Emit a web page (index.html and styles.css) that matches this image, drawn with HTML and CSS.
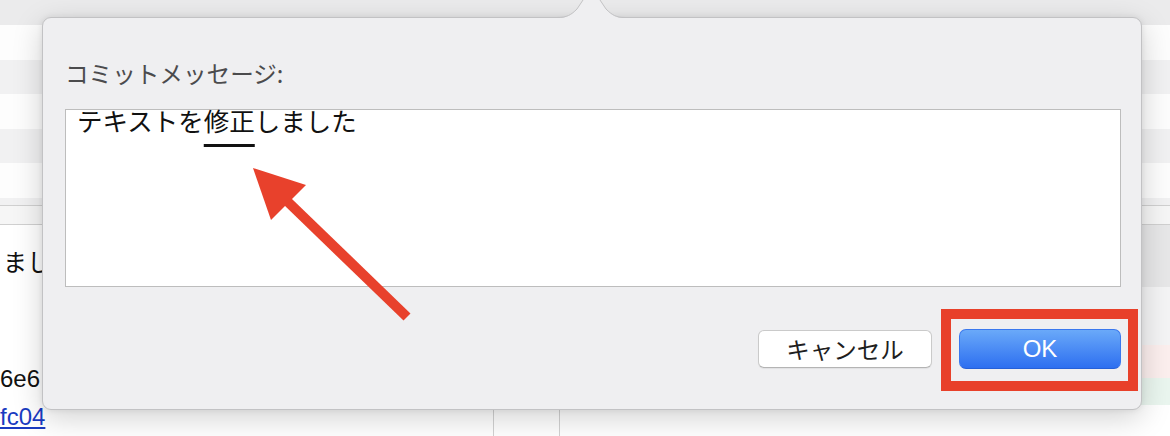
FILE: index.html
```html
<!DOCTYPE html>
<html lang="ja">
<head>
  <meta charset="UTF-8">
  <title>コミット</title>
  <link rel="stylesheet" href="styles.css">
</head>
<body>

<div class="app">
  <div class="toolbar"></div>
  <div class="history">
    <div class="history-row"></div>
    <div class="history-row alt"></div>
    <div class="history-row"></div>
    <div class="history-row alt"></div>
    <div class="history-row"></div>
    <div class="history-row alt short"></div>
  </div>
  <div class="tab-bar"></div>
  <div class="panes">
    <div class="pane pane-info">
      <p class="info-line message">ました</p>
      <p class="info-line hash">6e6</p>
      <p class="info-line"><a class="hash-link" href="#">fc04</a></p>
    </div>
    <div class="pane pane-mid"></div>
    <div class="pane pane-diff">
      <div class="diff-row hunk"></div>
      <div class="diff-row context"></div>
      <div class="diff-row removed"></div>
      <div class="diff-row added"></div>
    </div>
  </div>
</div>

<div class="sheet">
  <svg class="sheet-notch" viewBox="0 0 70 20" width="70" height="20">
    <path d="M1 20 L1 18 C11 18 15 15 21 9 L27 0 L44 0 L50 9 C56 15 60 18 69 18 L69 20 Z" fill="#efeff1"/>
    <path d="M1 17.5 C11 17.5 15 15 21 9 L27 0 M44 0 L50 9 C56 15 60 17.5 69 17.5" fill="none" stroke="#c2c2c4" stroke-width="1"/>
  </svg>
  <div class="sheet-label">コミットメッセージ:</div>
  <div class="message-box">テキストを<span class="marked">修正</span>しました</div>
  <div class="sheet-buttons">
    <button class="btn btn-cancel">キャンセル</button>
    <button class="btn btn-ok">OK</button>
  </div>
</div>

<!-- 注釈 -->
<svg class="note-arrow" viewBox="0 0 170 165" width="170" height="165">
  <line x1="43" y1="42" x2="162" y2="157" stroke="#e8412c" stroke-width="10"/>
  <polygon points="8,8 61,25 26,60" fill="#e8412c"/>
</svg>
<div class="note-box"></div>

</body>
</html>
```

FILE: styles.css
```css
* {
  box-sizing: border-box;
}
body {
  margin: 0;
  width: 1170px;
  height: 436px;
  overflow: hidden;
  position: relative;
  background: #fff;
  font-family: "Noto Sans CJK JP", sans-serif;
}

/* 背景のアプリ */
.toolbar {
  height: 25px;
  background: #ebebec;
}
.history-row {
  height: 34.5px;
  background: #fdfdfd;
}
.history-row.alt {
  background: #f1f1f2;
}
.history-row.short {
  height: 7.5px;
}
.tab-bar {
  height: 20px;
  background: #f6f6f6;
  border-top: 1px solid #d0d0d0;
  border-bottom: 1px solid #d0d0d0;
}
.panes {
  display: grid;
  grid-template-columns: 494px 66px 1fr;
  height: 211px;
}
.pane-info,
.pane-mid {
  border-right: 1px solid #d2d2d2;
}
.pane-info {
  padding-left: 3px;
  overflow: hidden;
}
.info-line {
  margin: 0;
  font-size: 24px;
  line-height: 30px;
  white-space: nowrap;
  color: #111;
}
.info-line.message {
  margin-top: 21px;
}
.info-line.hash {
  margin-top: 88px;
  margin-left: -3px;
  font-family: "Liberation Sans", sans-serif;
}
.info-line .hash-link {
  display: inline-block;
  margin-top: 8px;
  margin-left: -3px;
  font-family: "Liberation Sans", sans-serif;
  color: #1a3bc1;
}
.diff-row.hunk {
  height: 62px;
  background: #e7e7e8;
}
.diff-row.context {
  height: 58px;
  background: #f4f4f5;
}
.diff-row.removed {
  height: 33px;
  background: #fcefee;
}
.diff-row.added {
  height: 27px;
  background: #eaf6ef;
}

/* シート */
.sheet {
  position: absolute;
  left: 42px;
  top: 17px;
  width: 1100px;
  height: 393px;
  background: #efeff1;
  border: 1px solid #c2c2c4;
  border-radius: 9px;
  box-shadow: 0 8px 30px rgba(0, 0, 0, 0.18), 0 0 6px rgba(0, 0, 0, 0.08);
  padding: 41px 20px 0 22px;
}
.sheet-notch {
  position: absolute;
  left: 513px;
  top: -18px;
  display: block;
}
.sheet-label {
  font-size: 23.6px;
  line-height: 28px;
  color: #4b4b4d;
  margin-bottom: 22px;
}
.message-box {
  height: 178px;
  background: #fff;
  border: 1px solid #bdbdbd;
  padding: 0 0 0 11px;
  font-size: 25.5px;
  line-height: 20px;
  color: #111;
  white-space: nowrap;
}
.marked {
  text-decoration: underline;
  text-decoration-thickness: 3px;
  text-underline-offset: 13px;
}
.sheet-buttons {
  display: flex;
  justify-content: flex-end;
  align-items: center;
  gap: 27px;
  margin-top: 42px;
}
.btn {
  border-radius: 6px;
  padding: 0;
  cursor: pointer;
}
.btn-cancel {
  width: 174px;
  height: 38px;
  background: #fff;
  border: 1px solid #cacaca;
  border-bottom-color: #b4b4b4;
  box-shadow: 0 1px 1px rgba(0, 0, 0, 0.06);
  font-family: "Noto Sans CJK JP", sans-serif;
  font-size: 23.5px;
  line-height: 36px;
  color: #1e1e1e;
}
.btn-ok {
  width: 162px;
  height: 40px;
  border-radius: 7px;
  border: 1px solid #3a78ee;
  border-bottom-color: #2560d8;
  background: linear-gradient(#6aa9f9, #2d6ff0);
  font-family: "Liberation Sans", sans-serif;
  font-size: 24px;
  color: #fff;
}

/* 注釈 */
.note-arrow {
  position: absolute;
  left: 245px;
  top: 160px;
}
.note-box {
  position: absolute;
  left: 941px;
  top: 309px;
  width: 197px;
  height: 82px;
  border: 10px solid #e8402a;
}
```
